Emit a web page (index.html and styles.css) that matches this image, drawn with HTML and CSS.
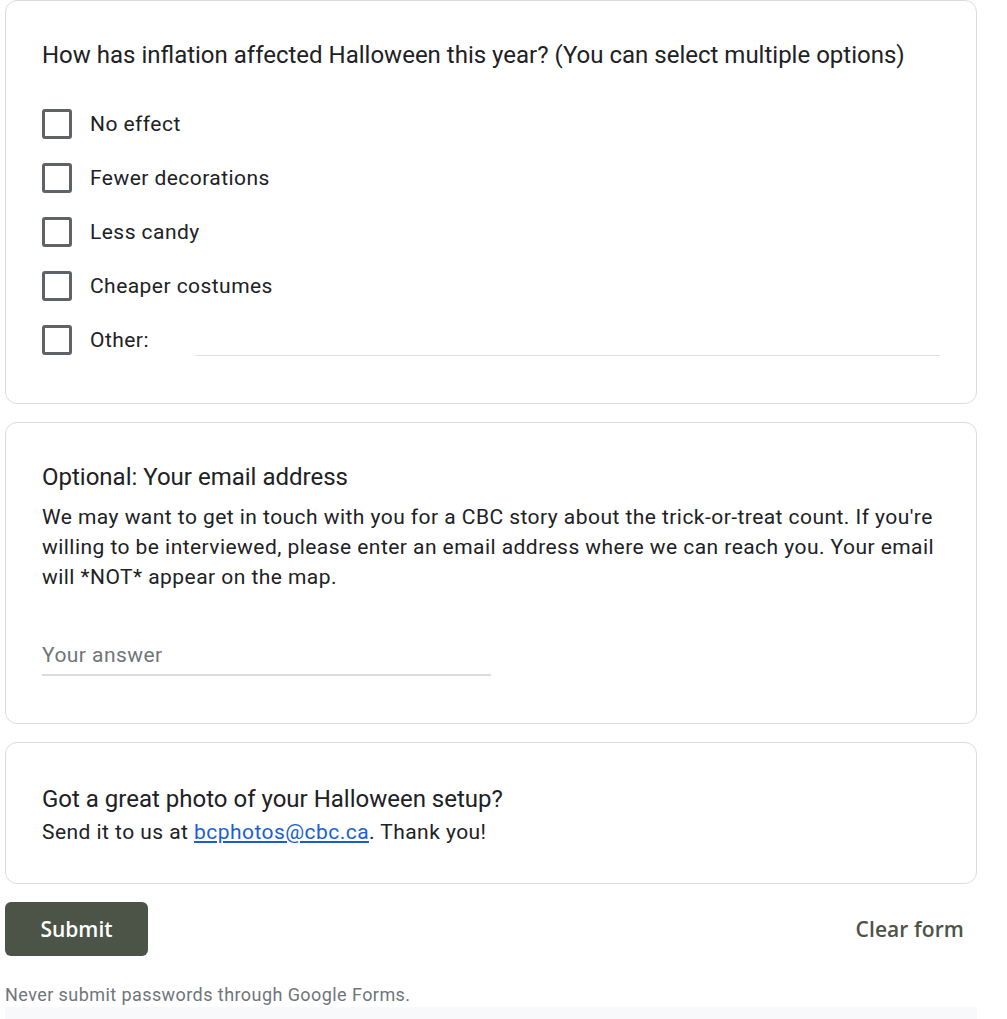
FILE: index.html
```html
<!DOCTYPE html>
<html lang="en">
<head>
<meta charset="utf-8">
<title>Trick-or-treat count</title>
<link rel="stylesheet" href="styles.css">
</head>
<body>
<div class="page">
  <section class="card">
    <div class="q-title">How has inflation affected Halloween this year? (You can select multiple options)</div>
    <div class="options">
      <div class="option"><span class="box"></span><span class="label">No effect</span></div>
      <div class="option"><span class="box"></span><span class="label">Fewer decorations</span></div>
      <div class="option"><span class="box"></span><span class="label">Less candy</span></div>
      <div class="option"><span class="box"></span><span class="label">Cheaper costumes</span></div>
      <div class="option"><span class="box"></span><span class="label other-label">Other:</span><span class="other-line"></span></div>
    </div>
  </section>

  <section class="card">
    <div class="q-title">Optional: Your email address</div>
    <div class="q-desc">We may want to get in touch with you for a CBC story about the trick-or-treat count. If you're willing to be interviewed, please enter an email address where we can reach you. Your email will *NOT* appear on the map.</div>
    <div class="answer"><span class="placeholder">Your answer</span></div>
  </section>

  <section class="card card-text">
    <div class="q-title">Got a great photo of your Halloween setup?</div>
    <div class="q-desc tight">Send it to us at <a class="link" href="#">bcphotos@cbc.ca</a>. Thank you!</div>
  </section>

  <div class="actions">
    <button class="submit" type="button">Submit</button>
    <button class="clear" type="button">Clear form</button>
  </div>

  <div class="footer">Never submit passwords through Google Forms.</div>
  <div class="strip"></div>
</div>
</body>
</html>
```

FILE: styles.css
```css
html, body {
  margin: 0;
  padding: 0;
  background: #ffffff;
}

body {
  font-family: Roboto, "Noto Sans", Arial, sans-serif;
  color: #202124;
}

.page {
  width: 972px;
  margin-left: 5px;
  display: flex;
  flex-direction: column;
  gap: 18px;
}

.card {
  box-sizing: border-box;
  border: 1px solid #dadce0;
  border-radius: 12px;
  padding: 36px;
  background: #fff;
}

.q-title {
  font-size: 24px;
  line-height: 36px;
  letter-spacing: 0;
  color: #202124;
}

.options {
  margin-top: 24px;
  display: flex;
  flex-direction: column;
}

.option {
  height: 54px;
  display: flex;
  align-items: center;
}

.box {
  box-sizing: border-box;
  width: 30px;
  height: 30px;
  border: 3px solid #5f6368;
  border-radius: 3px;
  flex: none;
}

.label {
  margin-left: 18px;
  font-size: 21px;
  letter-spacing: 0.45px;
  line-height: 30px;
  color: #202124;
}

.other-label {
  width: 105px;
  flex: none;
}

.other-line {
  flex: 1;
  align-self: flex-start;
  margin-top: 42px;
  height: 0;
  border-bottom: 1px solid #e0e0e0;
}

.q-desc {
  margin-top: 7px;
  font-size: 21px;
  line-height: 30px;
  letter-spacing: 0.45px;
  color: #202124;
}

.q-desc.tight {
  margin-top: 0;
}

.card-text {
  padding-top: 38px;
}

.answer {
  margin-top: 48px;
  width: 449px;
  padding-bottom: 4px;
  border-bottom: 2px solid #dadce0;
  margin-bottom: 11px;
}

.placeholder {
  display: block;
  font-size: 21px;
  line-height: 30px;
  letter-spacing: 0.45px;
  color: #70757a;
}

.link {
  color: #1a5fd0;
  text-decoration: underline;
}

.actions {
  display: flex;
  justify-content: space-between;
  align-items: center;
}

.submit {
  height: 54px;
  width: 143px;
  border: none;
  border-radius: 6px;
  background: #4b5447;
  color: #ffffff;
  font-family: "Open Sans", Roboto, sans-serif;
  font-weight: 600;
  font-size: 21px;
  letter-spacing: 0;
  cursor: pointer;
}

.clear {
  height: 54px;
  border: none;
  background: transparent;
  padding: 0 13px;
  color: #4b5447;
  font-family: "Open Sans", Roboto, sans-serif;
  font-weight: 600;
  font-size: 21px;
  letter-spacing: 0.1px;
  cursor: pointer;
}

.footer {
  margin-top: 9px;
  font-size: 18px;
  line-height: 24px;
  letter-spacing: 0.43px;
  color: #70757a;
}

.strip {
  margin-top: -18px;
  height: 40px;
  background: #f8f9fa;
}
```
